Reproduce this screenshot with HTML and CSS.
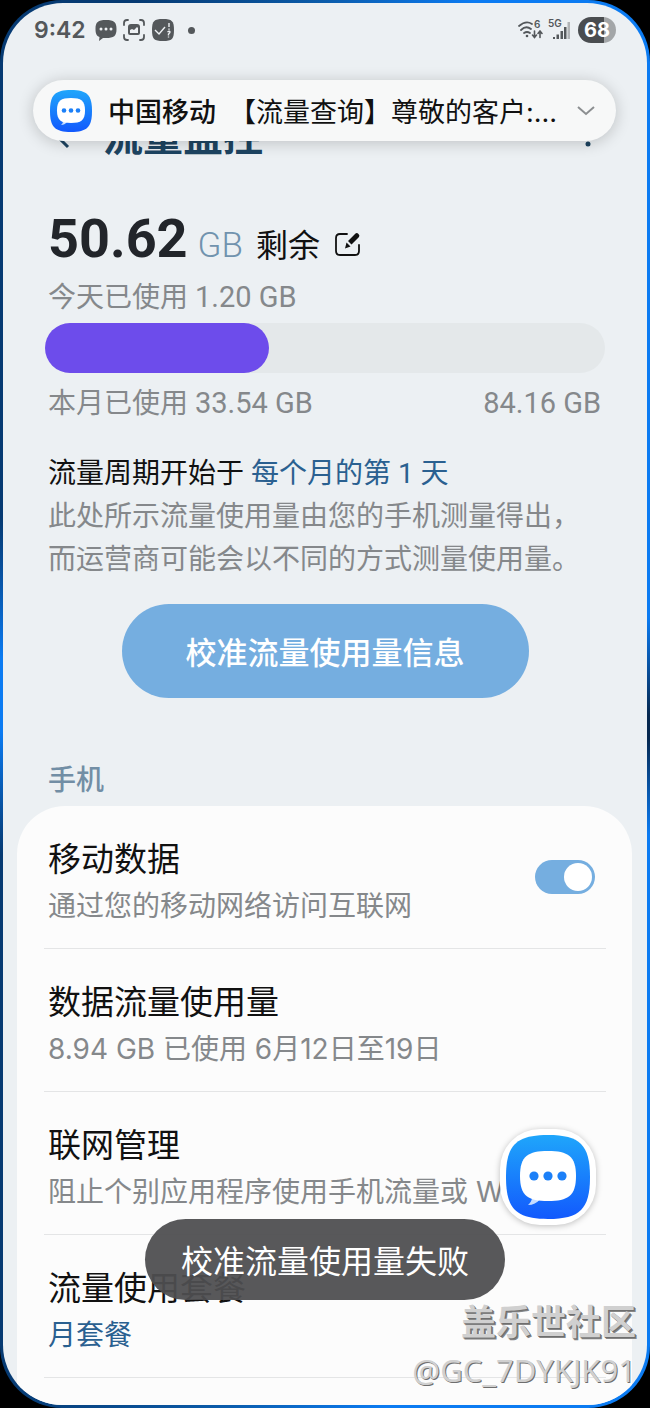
FILE: index.html
```html
<!DOCTYPE html>
<html lang="zh-CN">
<head>
<meta charset="utf-8">
<meta name="viewport" content="width=device-width, initial-scale=1">
<title>流量监控</title>
<link rel="stylesheet" href="styles.css">
</head>
<body>
<svg class="defs" aria-hidden="true">
  <defs>
    <linearGradient id="msg-blue" x1="0" y1="0" x2="0" y2="1">
      <stop offset="0" stop-color="#1fa6fb"/>
      <stop offset="1" stop-color="#1259fd"/>
    </linearGradient>
    <symbol id="msg-icon" viewBox="0 0 84 84">
      <path fill="url(#msg-blue)" d="M42 0C74 0 84 10 84 42S74 84 42 84 0 74 0 42 10 0 42 0Z"/>
      <path fill="#c5dcff" d="M26 62c0 4-2 6-4 8 5 0 9-2 12-6Z"/>
      <path fill="#fff" d="M42 16c20 0 28 5 28 25S62 66 42 66 14 61 14 41 22 16 42 16Z"/>
      <g fill="#1c80f8"><circle cx="28" cy="41" r="4.600"/><circle cx="42" cy="41" r="4.600"/><circle cx="56" cy="41" r="4.600"/></g>
    </symbol>
  </defs>
</svg>
<div class="glow">
<div class="screen">
  <div class="status">
    <span class="time">9:42</span>
    <svg class="st-icon" viewBox="0 0 22 22" width="22" height="22">
      <path fill="#54585b" d="M11 1c8 0 10.500 2 10.500 9S19 19 11 19H8l-4 3 .500-4C1.500 17 .500 14.500.500 10 .500 3 3 1 11 1Z"/>
      <g fill="#eef1f4"><circle cx="6" cy="10" r="1.500"/><circle cx="11" cy="10" r="1.500"/><circle cx="16" cy="10" r="1.500"/></g>
    </svg>
    <svg class="st-icon" viewBox="0 0 22 22" width="22" height="22">
      <path fill="none" stroke="#54585b" stroke-width="1.800" stroke-linecap="round" d="M1 6V4q0-3 3-3h1M17 1h1q3 0 3 3v2M21 16v2q0 3-3 3h-1M5 21H4q-3 0-3-3v-2"/>
      <path fill="#54585b" d="M8 5h6q3 0 3 3v6q0 2-2 2H7q-2 0-2-2V8q0-3 3-3Z"/>
      <path fill="#eef1f4" d="M7 14v-3l2-1 2 1 3-3 1 1v5Z"/>
    </svg>
    <svg class="st-icon st-wide" viewBox="0 0 24 24" width="24" height="24">
      <path fill="#54585b" d="M12 1c9 0 11 2 11 11s-2 11-11 11S1 21 1 12 3 1 12 1Z"/>
      <path fill="none" stroke="#eef1f4" stroke-width="1.400" d="m4 12 4 4 6-7M18 5v4M18 10.500v1.200M16.500 14q2-1.500 2.500 0 0 1-1.500 2v1.500M17.500 18.500v1"/>
    </svg>
    <span class="dot"></span>
    <span class="spacer"></span>
    <svg viewBox="0 0 26 24" width="26" height="24">
      <g fill="none" stroke="#54585b" stroke-width="1.800" stroke-linecap="round">
        <path d="M2 8q7-6 13-2M4 12q5-5 10-1M7 15q3-2 6 0"/>
        <path stroke-width="1.600" d="M17.500 13v6M15.500 17l2 2.500 2-2.500M23 19.500v-6M21 15.500l2-2.500 2 2.500"/>
      </g>
      <circle cx="10" cy="18" r="1.300" fill="#54585b"/>
      <text class="tiny" x="17" y="10">6</text>
    </svg>
    <svg class="signal" viewBox="0 0 24 24" width="24" height="24">
      <text class="tiny" x="1" y="9">5G</text>
      <path fill="#54585b" d="M6 19h2v2H6zM9.500 16.500H12V21H9.500zM13.500 13H16v8h-2.500zM17 9h2.500v12H17z"/>
      <path fill="#b0b3b6" d="M20.500 4H23v17h-2.500z"/>
    </svg>
    <span class="battery">68</span>
  </div>

  <header class="appbar">
    <button class="icon-btn" aria-label="返回"><svg viewBox="0 0 16 26" width="16" height="26"><path fill="none" stroke="#1d4461" stroke-width="3" d="M14 2 3 13l11 11"/></svg></button>
    <h1>流量监控</h1>
    <button class="icon-btn" aria-label="更多"><svg viewBox="0 0 6 22" width="6" height="22"><g fill="#1d4461"><circle cx="3" cy="3" r="2.500"/><circle cx="3" cy="11" r="2.500"/><circle cx="3" cy="19" r="2.500"/></g></svg></button>
  </header>

  <section class="usage">
    <div class="remain">
      <strong>50.62</strong><span class="unit">GB</span><span class="left">剩余</span>
      <button class="icon-btn edit" aria-label="编辑"><svg viewBox="0 0 27 25" width="27" height="25">
        <path fill="none" stroke="#111" stroke-width="1.800" stroke-linecap="round" d="M13 2H6Q2 2 2 6v13q0 4 4 4h15q4 0 4-4v-6"/>
        <path fill="#111" d="m14 9 7.500-7.500q1.500-1 3 .500t.500 3L17.500 12.500Zm-1.500 1.500 4 4-5.500 2Z"/>
      </svg></button>
    </div>
    <p class="line">今天已使用 <span class="num">1.20 GB</span></p>
    <div class="bar"><div class="fill" style="width:40%"></div></div>
    <div class="line month"><span>本月已使用 <span class="num">33.54 GB</span></span><span class="num">84.16 GB</span></div>
    <p class="note"><span class="cycle">流量周期开始于 <a href="#cycle">每个月的第 1 天</a></span><br>此处所示流量使用量由您的手机测量得出，<br>而运营商可能会以不同的方式测量使用量。</p>
    <button class="primary">校准流量使用量信息</button>
  </section>

  <h2>手机</h2>
  <main class="card">
    <div class="row switch-row">
      <label for="mobile-data"><span class="title">移动数据</span><span class="sub">通过您的移动网络访问互联网</span></label>
      <input class="switch" id="mobile-data" type="checkbox" checked>
    </div>
    <div class="row"><span class="title">数据流量使用量</span><span class="sub">8.94 GB 已使用 6月12日至19日</span></div>
    <div class="row"><span class="title">联网管理</span><span class="sub">阻止个别应用程序使用手机流量或 WLAN</span></div>
    <div class="row"><span class="title">流量使用套餐</span><a class="sub" href="#plan">月套餐</a></div>
  </main>

  <aside class="notice">
    <svg width="42" height="42"><use href="#msg-icon"/></svg>
    <b>中国移动</b>
    <span class="message">【流量查询】尊敬的客户:...</span>
    <button class="icon-btn" aria-label="展开"><svg viewBox="0 0 18 10" width="18" height="10"><path fill="none" stroke="#8c8f91" stroke-width="2" d="m1 1 8 7 8-7"/></svg></button>
  </aside>
  <div class="bubble"><svg viewBox="0 0 84 84"><use href="#msg-icon"/></svg></div>
  <div class="toast" role="status">校准流量使用量失败</div>
  <div class="mark"><b>盖乐世社区</b><span>@GC_7DYKJK91</span></div>
</div>
</div>
</body>
</html>
```

FILE: styles.css
```css
* { box-sizing: border-box; }
body {
  margin: 0;
  background: #000;
  font-family: Roboto, "Noto Sans CJK SC", sans-serif;
  font-size: 28px;
  color: #111;
}
h1, h2, p { margin: 0; }
a { color: #2a6090; text-decoration: none; }
button { font: inherit; border: 0; cursor: pointer; }
.defs { position: absolute; width: 0; height: 0; }
.icon-btn { display: flex; padding: 0; background: none; }

.glow {
  display: flex;
  min-height: 100vh;
  padding: 3px;
  border-radius: 62px;
  background: conic-gradient(#0b5cab 0deg, #0b7bf2 12deg, #0b7bf2 75deg, #06284f 92deg, #06284f 96deg, #0b7bf2 112deg, #0b7bf2 175deg, #0b5cab 188deg, #063a72 205deg, #063a72 245deg, #0b7bf2 265deg, #0b7bf2 278deg, #063a72 300deg, #063a72 345deg, #0b5cab 360deg);
}
.screen {
  position: relative;
  flex: 1;
  min-width: 0;
  overflow: hidden;
  display: flex;
  flex-direction: column;
  border-radius: 60px;
  background: #ecf0f3;
}

.status {
  display: flex;
  align-items: center;
  height: 54px;
  padding: 0 31px;
}
.time {
  margin-right: 9px;
  font: 600 23px/30px Inter, sans-serif;
  color: #54585b;
}
.st-icon { margin-right: 6px; }
.st-wide { margin-right: 13px; }
.dot { width: 7px; height: 7px; border-radius: 50%; background: #54585b; }
.spacer { flex: 1; }
.tiny { font: 600 10px Inter, sans-serif; fill: #54585b; }
.signal { margin: 0 7px 0 4px; }
.battery {
  width: 38px;
  border-radius: 13px;
  background: linear-gradient(90deg, #4a4d50 68%, #a3a6a8 68%);
  font: 700 20px/26px Inter, sans-serif;
  text-align: center;
  color: #fff;
}

.appbar {
  display: flex;
  align-items: center;
  height: 158px;
  padding: 0 56px 0 51px;
}
.appbar h1 {
  flex: 1;
  margin-left: 33px;
  padding-top: 4px;
  font-size: 40px;
  line-height: 56px;
  font-weight: 700;
  color: #1d4461;
}

.usage { display: flex; flex-direction: column; padding: 0 42px; }
.remain {
  display: flex;
  align-items: baseline;
  height: 60px;
  padding-left: 3px;
  line-height: 48px;
}
.remain strong { font-size: 54px; font-weight: 700; color: #22252a; }
.unit { margin: 0 13px 0 10px; font-size: 35px; font-weight: 300; color: #7193ae; }
.left { font-size: 32px; }
.edit { margin-left: 14px; }
.line { padding: 0 4px 0 3px; line-height: 44px; color: #85888b; }
.num { font-size: 29px; }
.bar {
  height: 50px;
  margin-top: 3px;
  border-radius: 25px;
  background: #e4e8ea;
}
.fill { height: 100%; border-radius: 25px; background: #6d4ceb; }
.month { display: flex; justify-content: space-between; margin-top: 8px; }
.note { margin-top: 26px; padding-left: 3px; line-height: 43px; color: #85888b; }
.cycle { color: #111; }
.primary {
  align-self: center;
  margin-top: 23px;
  padding: 6px 64px 0;
  border-radius: 47px;
  background: #75aee0;
  color: #fff;
  font-size: 31px;
  font-weight: 500;
  line-height: 88px;
}

h2 {
  margin: 63px 0 5px 45px;
  font-size: 28px;
  line-height: 40px;
  font-weight: 500;
  color: #728ea5;
}
.card {
  flex: 1;
  margin: 0 15px 0 14px;
  padding: 0 26px 26px 27px;
  border-radius: 48px 48px 0 0;
  background: #fcfcfc;
}
.row { padding: 31px 11px 19px 4px; border-bottom: 1px solid #e4e5e6; }
.title, .sub { display: block; line-height: 46px; white-space: nowrap; }
.title { font-size: 33px; }
.sub { font-family: Inter, "Noto Sans CJK SC", sans-serif; color: #85888b; }
a.sub { color: #2a6090; }
.switch-row { display: flex; align-items: center; justify-content: space-between; }
.switch {
  appearance: none;
  display: flex;
  width: 60px;
  height: 34px;
  margin: 0 0 12px;
  padding: 3px;
  border-radius: 17px;
  background: #a9adb0;
}
.switch::before { content: ""; width: 28px; height: 28px; border-radius: 50%; background: #fff; }
.switch:checked { justify-content: flex-end; background: #75aee0; }

.notice {
  position: absolute;
  top: 77px;
  left: 30px;
  right: 31px;
  display: flex;
  align-items: center;
  height: 61px;
  padding: 0 21px 0 17px;
  border-radius: 31px;
  background: #f7f8f8;
  box-shadow: 0 2px 16px rgba(0, 0, 0, .2);
  font-family: Inter, "Noto Sans CJK SC", sans-serif;
  font-size: 27px;
  white-space: nowrap;
}
.notice b { margin: 0 13px 0 16px; font-weight: 500; }
.message { flex: 1; }
.bubble {
  position: absolute;
  right: 51px;
  bottom: 180px;
  display: flex;
  width: 96px;
  height: 96px;
  padding: 6px;
  border-radius: 40px;
  background: #fff;
  box-shadow: 0 1px 6px rgba(0, 0, 0, .25);
}
.toast {
  position: absolute;
  left: 50%;
  bottom: 105px;
  transform: translateX(-50%);
  padding: 6px 36px 0;
  border-radius: 41px;
  background: rgba(78, 78, 80, .94);
  color: #fff;
  font-size: 32px;
  line-height: 75px;
  white-space: nowrap;
}
.mark {
  position: absolute;
  right: 11px;
  bottom: 12px;
  display: flex;
  flex-direction: column;
  align-items: flex-end;
  color: #d0d0d0;
  font-size: 35px;
  line-height: 46px;
  text-shadow: 1px 1px 0 #6e6e6e, 2px 2px 0 #858585;
}
.mark span { font-family: "Noto Sans", sans-serif; font-size: 31px; font-weight: 400; text-shadow: 1px 1px 0 #6e6e6e; }
```
